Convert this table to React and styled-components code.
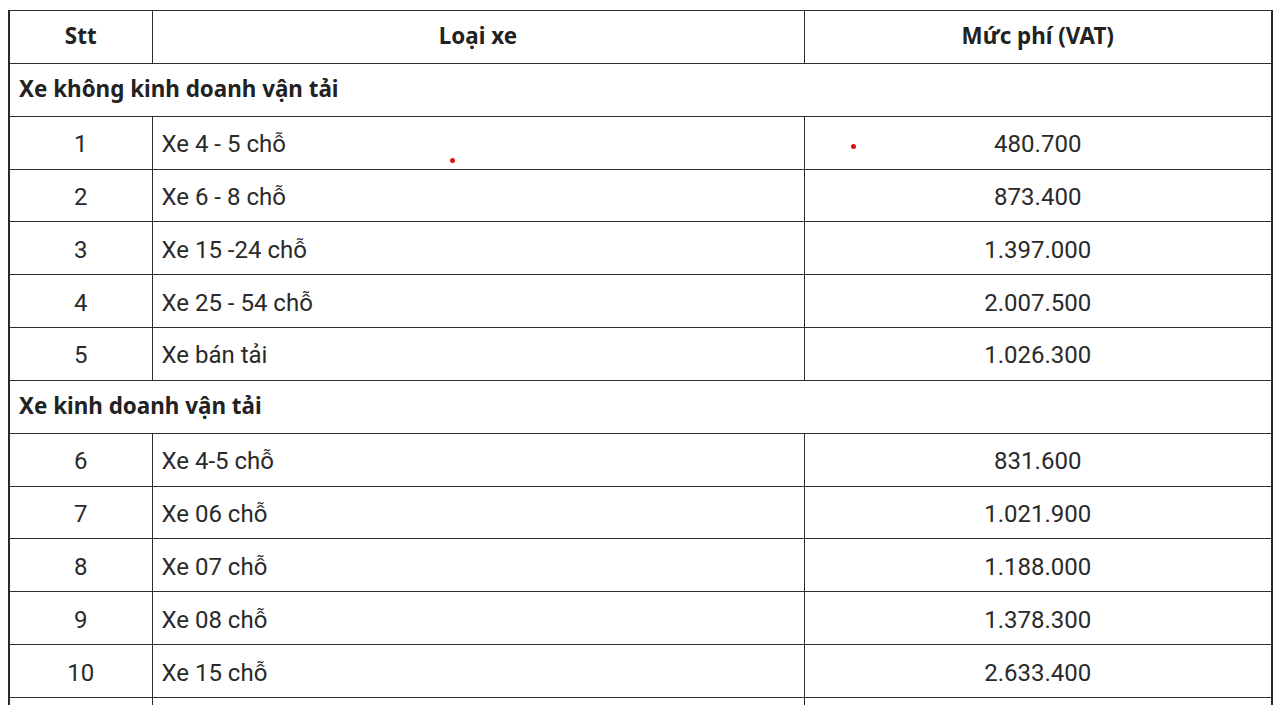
import React from "react";
import styled, { createGlobalStyle } from "styled-components";

const Global = createGlobalStyle`
  html, body { margin: 0; padding: 0; background: #fff; overflow: hidden; }
  body { font-family: Roboto, "Noto Sans", Arial, sans-serif; color: #252525; }
`;

const Page = styled.div`
  position: relative;
  padding: 10px 7px 0 8px;
  width: 1280px;
  height: 705px;
  box-sizing: border-box;
  overflow: hidden;
`;

const Table = styled.table`
  width: 1265px;
  border-collapse: collapse;
  table-layout: fixed;
  border-left: 2px solid #2a2a2a;
  border-right: 2px solid #2a2a2a;
  border-top: 1px solid #666;
`;

const Row = styled.tr`
  height: 52.85px;
`;

const Cell = styled.td`
  border: 1px solid #2e2e2e;
  padding: 3px ${(p) => (p.$align === "left" ? "9px" : "0")} 0;
  text-align: ${(p) => p.$align || "center"};
  vertical-align: middle;
  font-family: Roboto, Arial, sans-serif;
  font-size: 24px;
  font-weight: 400;
  color: #2a2a2a;
  white-space: nowrap;
`;

const HeadCell = styled.th`
  border: 1px solid #2e2e2e;
  padding: 0 0 2px;
  text-align: center;
  vertical-align: middle;
  font-family: "Noto Sans", "Open Sans", sans-serif;
  font-size: 22.4px;
  font-weight: 700;
  color: #222;
`;

const SectionCell = styled.td`
  border: 1px solid #2e2e2e;
  padding: 0 9px 3px;
  text-align: left;
  vertical-align: middle;
  font-family: "Noto Sans", "Open Sans", sans-serif;
  font-size: 22.4px;
  font-weight: 700;
  color: #222;
`;

const Dot = styled.span`
  position: absolute;
  width: 5px;
  height: 5px;
  border-radius: 50%;
  background: #e01010;
`;

const sections = [
  {
    title: "Xe không kinh doanh vận tải",
    rows: [
      ["1", "Xe 4 - 5 chỗ", "480.700"],
      ["2", "Xe 6 - 8 chỗ", "873.400"],
      ["3", "Xe 15 -24 chỗ", "1.397.000"],
      ["4", "Xe 25 - 54 chỗ", "2.007.500"],
      ["5", "Xe bán tải", "1.026.300"],
    ],
  },
  {
    title: "Xe kinh doanh vận tải",
    rows: [
      ["6", "Xe 4-5 chỗ", "831.600"],
      ["7", "Xe 06 chỗ", "1.021.900"],
      ["8", "Xe 07 chỗ", "1.188.000"],
      ["9", "Xe 08 chỗ", "1.378.300"],
      ["10", "Xe 15 chỗ", "2.633.400"],
      ["11", "", ""],
    ],
  },
];

export default function App() {
  return (
    <>
      <Global />
      <Page>
        <Table>
          <colgroup>
            <col style={{ width: "143px" }} />
            <col style={{ width: "652px" }} />
            <col />
          </colgroup>
          <thead>
            <Row>
              <HeadCell>Stt</HeadCell>
              <HeadCell>Loại xe</HeadCell>
              <HeadCell>Mức phí (VAT)</HeadCell>
            </Row>
          </thead>
          <tbody>
            {sections.map((s) => (
              <React.Fragment key={s.title}>
                <Row>
                  <SectionCell colSpan={3}>{s.title}</SectionCell>
                </Row>
                {s.rows.map((r) => (
                  <Row key={r[0]}>
                    <Cell>{r[1] ? r[0] : ""}</Cell>
                    <Cell $align="left">{r[1]}</Cell>
                    <Cell>{r[2]}</Cell>
                  </Row>
                ))}
              </React.Fragment>
            ))}
          </tbody>
        </Table>
        <Dot style={{ left: 450, top: 158 }} />
        <Dot style={{ left: 851, top: 144 }} />
      </Page>
    </>
  );
}
